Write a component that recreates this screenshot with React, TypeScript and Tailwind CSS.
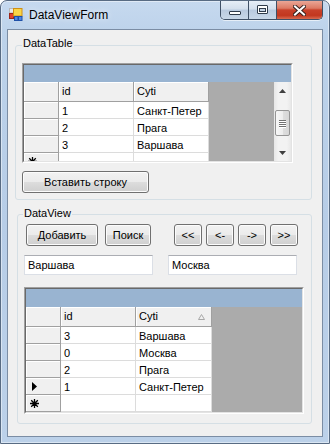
import React from "react";

type Row = [string, string];

function Btn({ className = "", children }: { className?: string; children: React.ReactNode }) {
  return (
    <div
      className={`flex h-[22px] shrink-0 items-center justify-center rounded-[3px] border border-[#707070] bg-[linear-gradient(#f2f2f2_0%,#ebebeb_49%,#dddddd_50%,#cfcfcf_100%)] text-[11px] leading-none text-black shadow-[inset_0_0_0_1px_#fcfcfc] ${className}`}
    >
      {children}
    </div>
  );
}

function TextBox({ children }: { children: React.ReactNode }) {
  return (
    <div className="h-[20px] w-[129px] shrink-0 border border-[#dbdfe6] border-t-[#abadb3] bg-white pl-[3px] text-[11px] leading-[18px] text-black">
      {children}
    </div>
  );
}

function Star() {
  return (
    <svg width="9" height="9" viewBox="0 0 9 9" className="ml-[4px]">
      <path d="M4.5 0V9M0 4.5H9M1.2 1.2L7.8 7.8M7.8 1.2L1.2 7.8" stroke="#000" strokeWidth="1.3" />
    </svg>
  );
}

function CurArrow() {
  return (
    <svg width="5" height="9" viewBox="0 0 5 9" className="ml-[6px]">
      <path d="M0 0L5 4.5L0 9Z" fill="#000" />
    </svg>
  );
}

function SortGlyph() {
  return (
    <svg width="7" height="6" viewBox="0 0 7 6" className="ml-auto mr-[6px]">
      <path d="M3.5 0.5L6.5 5.5H0.5Z" fill="none" stroke="#a8a8a8" strokeWidth="1" />
    </svg>
  );
}

function ScrollBar() {
  return (
    <div className="flex w-[17px] shrink-0 flex-col bg-[linear-gradient(90deg,#e6e6e6,#f2f2f2_25%,#f2f2f2_75%,#e8e8e8)]">
      <div className="flex h-[17px] shrink-0 items-center justify-center">
        <svg width="7" height="4" viewBox="0 0 7 4">
          <path d="M3.5 0L7 4H0Z" fill="#3f3f3f" />
        </svg>
      </div>
      <div className="min-h-0 flex-1">
        <div className="mx-[1px] mt-[11px] flex h-[26px] flex-col items-center justify-center gap-[1px] rounded-[2px] border border-[#959595] bg-[linear-gradient(90deg,#f7f7f7,#ededed_50%,#dedede_50%,#d6d6d6)]">
          <div className="h-[1px] w-[7px] bg-[#707070] shadow-[0_1px_0_#ffffff]" />
          <div className="h-[1px] w-[7px] bg-[#707070] shadow-[0_1px_0_#ffffff]" />
          <div className="h-[1px] w-[7px] bg-[#707070] shadow-[0_1px_0_#ffffff]" />
          <div className="h-[1px] w-[7px] bg-[#707070] shadow-[0_1px_0_#ffffff]" />
        </div>
      </div>
      <div className="flex h-[17px] shrink-0 items-center justify-center">
        <svg width="7" height="4" viewBox="0 0 7 4">
          <path d="M0 0H7L3.5 4Z" fill="#3f3f3f" />
        </svg>
      </div>
    </div>
  );
}

const hdr =
  "flex shrink-0 items-center border-r border-b border-r-[#a0a0a0] border-b-[#a0a0a0] bg-[#f0f0f0] pl-[3px] text-[11px] leading-[19px] text-black shadow-[inset_1px_1px_0_#ffffff]";
const rh =
  "flex w-[35px] shrink-0 items-center border-r border-b border-r-[#a0a0a0] border-b-[#a0a0a0] bg-[#f0f0f0] shadow-[inset_1px_1px_0_#ffffff]";
const cell =
  "shrink-0 overflow-hidden whitespace-nowrap border-r border-b border-[#dcdcdc] bg-white pl-[3px] pt-[2px] text-[11px] leading-[14px] text-black";

function Grid({
  rows,
  current,
  outerCls,
  bandCls,
  cytiCls,
  scroll,
  sort,
}: {
  rows: Row[];
  current?: number;
  outerCls: string;
  bandCls: string;
  cytiCls: string;
  scroll?: boolean;
  sort?: boolean;
}) {
  return (
    <div className={`shrink-0 border border-t-[#a0a0a0] border-l-[#a0a0a0] border-r-white border-b-white ${outerCls}`}>
      <div className="flex h-full flex-col overflow-hidden border border-t-[#696969] border-l-[#696969] border-r-[#e3e3e3] border-b-[#e3e3e3] bg-[#ababab]">
        <div className={`shrink-0 bg-[#99b4d1] ${bandCls}`} />
        <div className="flex min-h-0 flex-1">
          <div className="flex shrink-0 flex-col">
            <div className="flex h-[20px] shrink-0">
              <div className={`${hdr} w-[35px]`} />
              <div className={`${hdr} w-[75px]`}>id</div>
              <div className={`${hdr} ${cytiCls}`}>
                Cyti
                {sort && <SortGlyph />}
              </div>
            </div>
            {rows.map((r, i) => (
              <div key={i} className="flex h-[17px] shrink-0">
                <div className={rh}>{current === i && <CurArrow />}</div>
                <div className={`${cell} w-[75px]`}>{r[0]}</div>
                <div className={`${cell} ${cytiCls}`}>{r[1]}</div>
              </div>
            ))}
            <div className="flex h-[17px] shrink-0">
              <div className={rh}>
                <Star />
              </div>
              <div className={`${cell} w-[75px]`} />
              <div className={`${cell} ${cytiCls}`} />
            </div>
          </div>
          <div className="flex-1" />
          {scroll && <ScrollBar />}
        </div>
      </div>
    </div>
  );
}

function AppIcon() {
  return (
    <svg width="16" height="16" viewBox="0 0 16 16" className="ml-[7px] shrink-0">
      <rect x="1.5" y="1.5" width="4" height="4.5" fill="#e9e9e9" stroke="#b8b8b8" />
      <rect x="1.5" y="6.5" width="4" height="5" fill="#e2412f" stroke="#9c2518" />
      <rect x="5.5" y="1.5" width="8.5" height="7.5" fill="#f9d548" stroke="#cf8f14" />
      <rect x="6.5" y="9.5" width="3.5" height="4" fill="#4f86e2" stroke="#1f50a8" />
      <rect x="10.5" y="9.5" width="3.5" height="4" fill="#4f86e2" stroke="#1f50a8" />
    </svg>
  );
}

function CaptionButtons() {
  return (
    <div className="ml-auto mr-[6px] flex h-[19px] self-start overflow-hidden rounded-b-[5px] border border-t-0 border-[#3f5066] shadow-[0_1px_0_rgba(255,255,255,0.6)]">
      <div className="flex w-[27px] justify-center bg-[linear-gradient(#e6eef7,#d3dfed_45%,#b9cadf_50%,#c8d7e8)] pt-[10px]">
        <div className="h-[4px] w-[12px] rounded-[1px] border border-[#2f3b4a] bg-white" />
      </div>
      <div className="flex w-[28px] justify-center border-l border-[#3f5066] bg-[linear-gradient(#e6eef7,#d3dfed_45%,#b9cadf_50%,#c8d7e8)] pt-[4px]">
        <div className="flex h-[9px] w-[11px] rounded-[1px] border border-[#2f3b4a] bg-white p-[1px] pt-[2px]">
          <div className="flex-1 border border-[#2f3b4a] bg-[#c5d3e4]" />
        </div>
      </div>
      <div className="flex w-[46px] justify-center border-l border-[#3f5066] bg-[linear-gradient(#eaa696,#dc7a64_40%,#c8412a_50%,#c2371f_80%,#d86a50)] pt-[4px]">
        <svg width="13" height="11" viewBox="0 0 13 11">
          <path d="M2 1.5L11 9.5M11 1.5L2 9.5" stroke="#3a2320" strokeWidth="4" strokeLinecap="square" />
          <path d="M2 1.5L11 9.5M11 1.5L2 9.5" stroke="#ffffff" strokeWidth="2" strokeLinecap="square" />
        </svg>
      </div>
    </div>
  );
}

export default function App() {
  const rows1: Row[] = [
    ["1", "Санкт-Петер"],
    ["2", "Прага"],
    ["3", "Варшава"],
  ];
  const rows2: Row[] = [
    ["3", "Варшава"],
    ["0", "Москва"],
    ["2", "Прага"],
    ["1", "Санкт-Петер"],
  ];
  return (
    <div className="flex h-[444px] w-[330px] flex-col overflow-hidden rounded-t-[7px] border border-[#586b83] bg-[linear-gradient(180deg,#c6d9ef_0%,#bcd2ea_8%,#b7cde7_50%,#bcd1e9_100%)] font-['Liberation_Sans',Arial,sans-serif] shadow-[inset_0_0_0_1px_rgba(255,255,255,0.45)]">
      <div className="flex h-[28px] shrink-0 items-center">
        <AppIcon />
        <span className="ml-[5px] text-[12px] leading-[14px] text-black [text-shadow:0_0_6px_rgba(255,255,255,0.9)]">
          DataViewForm
        </span>
        <CaptionButtons />
      </div>
      <div className="ml-[6px] h-[408px] w-[316px] shrink-0 border border-[#7b8da4] bg-[#f0f0f0] pl-[7px] pt-[15px]">
        {/* DataTable group */}
        <div className="relative flex h-[155px] w-[297px] flex-col rounded-[3px] border border-[#d5dfe5] pl-[6px] pt-[17px]">
          <span className="absolute left-[6px] top-[-9px] bg-[#f0f0f0] px-[1px] text-[11px] leading-[13px] text-black">
            DataTable
          </span>
          <Grid
            rows={rows1}
            outerCls="h-[100px] w-[271px]"
            bandCls="h-[17px]"
            cytiCls="w-[75px]"
            scroll
          />
          <Btn className="mt-[8px] w-[127px]">Вставить строку</Btn>
        </div>
        {/* DataView group */}
        <div className="relative ml-[2px] mt-[14px] flex h-[210px] w-[295px] flex-col rounded-[3px] border border-[#d5dfe5] pl-[6px] pt-[9px]">
          <span className="absolute left-[5px] top-[-8px] bg-[#f0f0f0] px-[1px] text-[11px] leading-[13px] text-black">
            DataView
          </span>
          <div className="ml-[2px] flex">
            <Btn className="w-[72px]">Добавить</Btn>
            <Btn className="ml-[7px] w-[46px]">Поиск</Btn>
            <div className="ml-[23px] flex gap-[4px]">
              <Btn className="w-[28px]">&lt;&lt;</Btn>
              <Btn className="w-[28px]">&lt;-</Btn>
              <Btn className="w-[28px]">-&gt;</Btn>
              <Btn className="w-[28px]">&gt;&gt;</Btn>
            </div>
          </div>
          <div className="mt-[9px] flex gap-[15px]">
            <TextBox>Варшава</TextBox>
            <TextBox>Москва</TextBox>
          </div>
          <div className="mt-[12px]">
            <Grid
              rows={rows2}
              current={3}
              outerCls="h-[127px] w-[280px]"
              bandCls="h-[18px]"
              cytiCls="w-[76px]"
              sort
            />
          </div>
        </div>
      </div>
    </div>
  );
}
